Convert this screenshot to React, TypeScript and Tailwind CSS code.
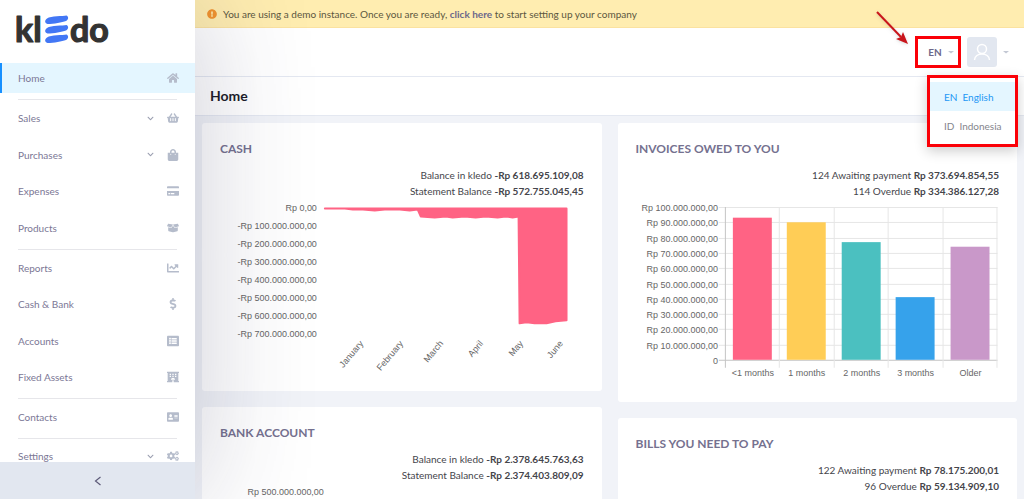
import type { ReactNode } from 'react'
import type { IconType } from 'react-icons'
import {
  FaAddressCard,
  FaBoxOpen,
  FaChartLine,
  FaChevronDown,
  FaCogs,
  FaCreditCard,
  FaDollarSign,
  FaExclamationCircle,
  FaHome,
  FaHotel,
  FaListAlt,
  FaShoppingBag,
  FaShoppingBasket,
} from 'react-icons/fa'

type NavItem = { name: string; icon: IconType; expandable?: boolean }

const NAV_GROUPS: { height: string; items: NavItem[] }[] = [
  {
    height: 'h-[146px]',
    items: [
      { name: 'Sales', icon: FaShoppingBasket, expandable: true },
      { name: 'Purchases', icon: FaShoppingBag, expandable: true },
      { name: 'Expenses', icon: FaCreditCard },
      { name: 'Products', icon: FaBoxOpen },
    ],
  },
  {
    height: 'h-[145px]',
    items: [
      { name: 'Reports', icon: FaChartLine },
      { name: 'Cash & Bank', icon: FaDollarSign },
      { name: 'Accounts', icon: FaListAlt },
      { name: 'Fixed Assets', icon: FaHotel },
    ],
  },
  { height: 'h-9', items: [{ name: 'Contacts', icon: FaAddressCard }] },
  {
    height: 'h-[34px]',
    items: [{ name: 'Settings', icon: FaCogs, expandable: true }],
  },
]

const CASH_TICKS = [
  'Rp 0,00',
  '-Rp 100.000.000,00',
  '-Rp 200.000.000,00',
  '-Rp 300.000.000,00',
  '-Rp 400.000.000,00',
  '-Rp 500.000.000,00',
  '-Rp 600.000.000,00',
  '-Rp 700.000.000,00',
]

const MONTHS = ['January', 'February', 'March', 'April', 'May', 'June']

const INVOICE_BARS = [
  { label: '<1 months', value: 93, color: '#ff6384' },
  { label: '1 months', value: 90, color: '#ffcd56' },
  { label: '2 months', value: 77, color: '#4bc0c0' },
  { label: '3 months', value: 41, color: '#36a2eb' },
  { label: 'Older', value: 74, color: '#c998c9' },
]

const STRIPE =
  'M31 4.500C35 1.500 47 2.500 50.500 1.500C53 3 52.500 5.500 50 7C46 8.500 38 10 31.500 10C28.500 9 28.500 6.500 31 4.500Z'

const Logo = () => (
  <svg viewBox="0 -8 96 48" className="h-12 w-24" role="img" aria-label="kledo">
    <g
      fill="#333333"
      stroke="#333333"
      strokeWidth="1.200"
      strokeLinejoin="round"
      fontFamily="Lato, sans-serif"
      fontWeight="700"
      fontSize="34"
    >
      <text x="-1" y="28">kl</text>
      <text x="54" y="28">do</text>
    </g>
    <g fill="#4277f5">
      <path d={STRIPE} />
      <path d={STRIPE} transform="translate(0 9.500)" />
      <path d={STRIPE} transform="translate(0 19)" />
    </g>
  </svg>
)

const NavRow = ({ item }: { item: NavItem }) => {
  const Icon = item.icon
  return (
    <li className="flex-1">
      <a href="#" className="flex h-full items-center pl-[18px] pr-4">
        <span className="flex-1">{item.name}</span>
        {item.expandable && (
          <FaChevronDown className="mr-[13px] h-[7px] w-[7px] text-[#9a9eb0]" />
        )}
        <Icon className="h-3 w-3 text-[#b5bccb]" />
      </a>
    </li>
  )
}

const Sidebar = () => (
  <aside className="relative z-10 flex w-[195px] shrink-0 flex-col bg-white shadow-[0_0_120px_rgba(40,40,80,0.24)]">
    <div className="h-[60px] pl-4 pt-[6px]">
      <Logo />
    </div>
    <nav
      aria-label="Main navigation"
      className="flex min-h-0 flex-1 flex-col overflow-hidden text-[#7b7795]"
    >
      <a
        href="#"
        className="my-[3px] flex h-[30px] shrink-0 items-center border-l-2 border-[#1890ff] bg-[#e4f6ff] pl-4 pr-4"
      >
        <span className="flex-1">Home</span>
        <FaHome className="h-3 w-3 text-[#b5bccb]" />
      </a>
      {NAV_GROUPS.map((group) => (
        <div key={group.items[0].name} className="shrink-0">
          <hr className="mx-[18px] mt-[3px] border-[#e6e6ea]" />
          <ul className={`flex flex-col ${group.height}`}>
            {group.items.map((item) => (
              <NavRow key={item.name} item={item} />
            ))}
          </ul>
        </div>
      ))}
    </nav>
    <button
      aria-label="Collapse sidebar"
      className="flex h-[37px] items-center justify-center bg-[#e2e7f0] text-[#5d5a78]"
    >
      <svg viewBox="0 0 8 10" className="h-[10px] w-2" fill="none" stroke="currentColor" strokeWidth="1.200">
        <path d="M6.500 1 1.500 5l5 4" />
      </svg>
    </button>
  </aside>
)

const Caret = () => (
  <svg viewBox="0 0 6 4" className="h-1 w-[6px]" fill="#c3c8d4" aria-hidden="true">
    <path d="M0 1h6L3 3.500Z" />
  </svg>
)

const LanguageMenu = () => (
  <div className="absolute right-[6px] top-[75px] z-20 flex w-[91px] flex-col border-[3px] border-[#fb0007] bg-white py-1 shadow-[0_4px_12px_rgba(0,0,0,0.2)]">
    <button className="flex h-[29px] items-center gap-[5px] bg-[#e4f6ff] pl-[14px] text-[#1e98f5]">
      <span>EN</span>
      <span>English</span>
    </button>
    <button className="flex h-[29px] items-center gap-[5px] pl-[14px] text-[#85858c]">
      <span>ID</span>
      <span>Indonesia</span>
    </button>
  </div>
)

const Header = () => (
  <header className="flex h-[49px] items-center justify-end border-b border-[#e4e8f1] bg-white pr-[15px]">
    <button className="flex h-8 w-[46px] items-center justify-center gap-[6px] border-[3px] border-[#fb0007] pl-[6px] font-bold text-[#6c688a]">
      EN
      <Caret />
    </button>
    <button aria-label="Account" className="ml-[6px] flex items-center gap-[6px]">
      <span className="flex h-[30px] w-[30px] items-center justify-center rounded-[3px] bg-[#e2e7f0]">
        <svg viewBox="0 0 18 18" className="h-[18px] w-[18px]" fill="none" stroke="#fff" strokeWidth="1.500">
          <circle cx="9" cy="6" r="4.500" />
          <path d="M1.500 17c0-8 15-8 15 0" />
        </svg>
      </span>
      <Caret />
    </button>
  </header>
)

const Arrow = () => (
  <svg
    viewBox="0 0 36 36"
    className="absolute right-[114px] top-[9px] z-20 h-9 w-9 drop-shadow"
    aria-hidden="true"
  >
    <path d="M3 3 27 28" stroke="#c9151b" strokeWidth="2" />
    <path d="m34 35-12-5 5-2 2-5Z" fill="#c9151b" />
  </svg>
)

const Card = ({ title, children }: { title: string; children?: ReactNode }) => (
  <section className="rounded-[3px] bg-white px-[18px] pt-[17px]">
    <h2 className="text-xs font-bold leading-[18px] text-[#75718f]">{title}</h2>
    {children}
  </section>
)

const Summary = ({ rows }: { rows: [string, string][] }) => (
  <div className="mt-[9px] text-right leading-4 text-[#45454b]">
    {rows.map(([label, amount]) => (
      <p key={label}>
        {label} <strong className="font-bold">{amount}</strong>
      </p>
    ))}
  </div>
)

const CashChart = () => (
  <svg
    viewBox="0 0 364 192"
    className="block w-full font-['Liberation_Sans',sans-serif]"
    fontSize="9"
    fill="#666"
    role="img"
    aria-label="Cash balance by month"
  >
    {CASH_TICKS.map((tick, i) => (
      <text key={tick} x="97" y={12 + i * 18} textAnchor="end">
        {tick}
      </text>
    ))}
    <path
      d="M105 9.500h242v112l-11 1-9 2h-12l-8-1-7 1-1-107-6 1-7-1-8 1-12-1-10 1-11-1-12 1-7-1-11 1-14-1-3-7-8 1-10-1-15 0-10 1-12-1-10 0-8-1H105Z"
      fill="#ff6384"
      stroke="#ff6384"
      strokeWidth="2"
      strokeLinejoin="round"
    />
    {MONTHS.map((month, i) => (
      <text
        key={month}
        x="0"
        y="0"
        textAnchor="end"
        transform={`translate(${144 + i * 40} 145) rotate(-50)`}
      >
        {month}
      </text>
    ))}
  </svg>
)

const InvoiceChart = () => (
  <svg
    viewBox="0 0 364 203"
    className="block w-full font-['Liberation_Sans',sans-serif]"
    fontSize="9"
    fill="#666"
    role="img"
    aria-label="Invoices owed by age"
  >
    {Array.from({ length: 11 }, (_, i) => (
      <g key={i}>
        <path
          d={`M83 ${8.5 + Math.round(i * 15.3)}H362`}
          stroke={i === 10 ? '#c4c4c4' : '#e6e6e6'}
        />
        <text x="82" y={12 + Math.round(i * 15.3)} textAnchor="end">
          {i === 10 ? '0' : `Rp ${100 - i * 10}.000.000,00`}
        </text>
      </g>
    ))}
    {Array.from({ length: 6 }, (_, i) => (
      <path
        key={i}
        d={`M${89.5 + Math.round(i * 54.4)} 8V169`}
        stroke={i === 0 ? '#c4c4c4' : '#e6e6e6'}
      />
    ))}
    {INVOICE_BARS.map((bar, i) => (
      <g key={bar.label}>
        <rect
          x={97 + Math.round(i * 54.4)}
          y={161 - bar.value * 1.53}
          width="39"
          height={bar.value * 1.53}
          fill={bar.color}
        />
        <text x={117 + Math.round(i * 54.4)} y="177" textAnchor="middle">
          {bar.label}
        </text>
      </g>
    ))}
  </svg>
)

const App = () => (
  <div className="flex h-screen overflow-hidden bg-[#f1f3f8] font-[Lato,sans-serif] text-[10px] leading-4">
    <Sidebar />
    <main className="relative min-w-0 flex-1">
      <div className="flex h-7 items-center border-b border-[#fbe2a0] bg-[#ffedb0] pl-3 text-[#5c573f]">
        <FaExclamationCircle className="mr-[6px] h-[10px] w-[10px] text-[#f2932e]" />
        <p>
          You are using a demo instance. Once you are ready,{' '}
          <a href="#" className="font-bold text-[#6c688a]">
            click here
          </a>{' '}
          to start setting up your company
        </p>
      </div>
      <Header />
      <Arrow />
      <LanguageMenu />
      <div className="flex h-[39px] items-center border-b border-[#e4e8f1] bg-white pl-[15px]">
        <h1 className="text-sm font-bold text-[#1c1c28]">Home</h1>
      </div>
      <div className="grid grid-cols-2 items-start gap-4 px-[7px] pt-[7px]">
        <div className="flex flex-col gap-4">
          <Card title="CASH">
            <Summary
              rows={[
                ['Balance in kledo', '-Rp 618.695.109,08'],
                ['Statement Balance', '-Rp 572.755.045,45'],
              ]}
            />
            <CashChart />
          </Card>
          <Card title="BANK ACCOUNT">
            <Summary
              rows={[
                ['Balance in kledo', '-Rp 2.378.645.763,63'],
                ['Statement Balance', '-Rp 2.374.403.809,09'],
              ]}
            />
            <svg
              viewBox="0 0 364 192"
              className="block w-full font-['Liberation_Sans',sans-serif]"
              fontSize="9"
              fill="#666"
              role="img"
              aria-label="Bank balance by month"
            >
              <text x="104" y="12" textAnchor="end">
                Rp 500.000.000,00
              </text>
            </svg>
          </Card>
        </div>
        <div className="flex flex-col gap-4">
          <Card title="INVOICES OWED TO YOU">
            <Summary
              rows={[
                ['124 Awaiting payment', 'Rp 373.694.854,55'],
                ['114 Overdue', 'Rp 334.386.127,28'],
              ]}
            />
            <InvoiceChart />
          </Card>
          <Card title="BILLS YOU NEED TO PAY">
            <Summary
              rows={[
                ['122 Awaiting payment', 'Rp 78.175.200,01'],
                ['96 Overdue', 'Rp 59.134.909,10'],
              ]}
            />
            <div className="h-48" />
          </Card>
        </div>
      </div>
    </main>
  </div>
)

export default App
